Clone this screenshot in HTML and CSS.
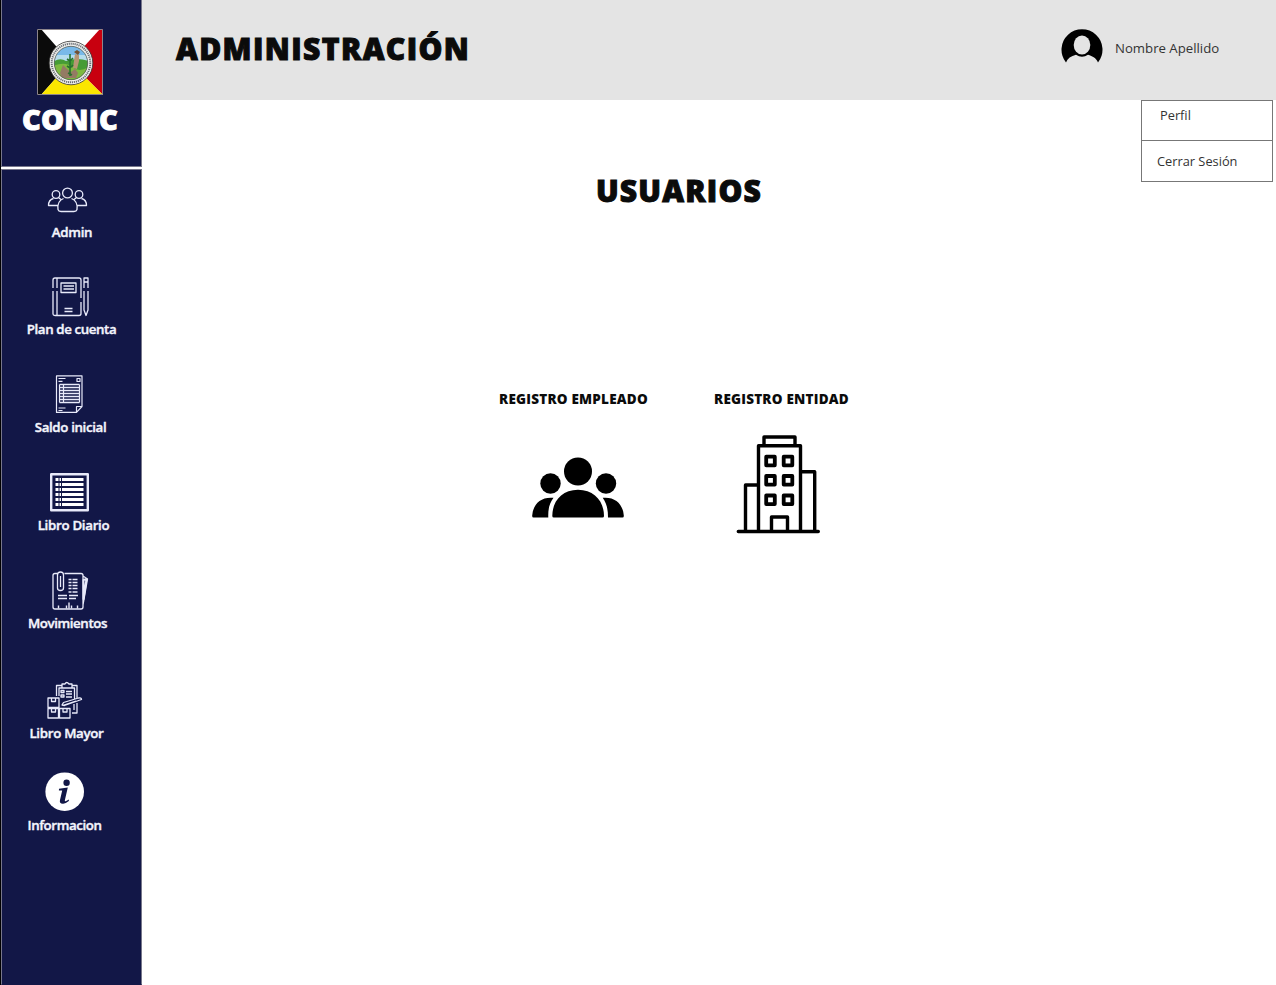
FILE: index.html
```html
<!DOCTYPE html>
<html lang="es">
<head>
<meta charset="utf-8">
<title>CONIC - Administración</title>
<link rel="stylesheet" href="styles.css">
</head>
<body>
<div class="app">
  <aside class="sidebar">
    <div class="brand">
      <svg class="flag" viewBox="37 29 66 66">
        <path fill="#fff" d="M37 29h66v66H37z"/>
        <path fill="#0b0b0b" d="M37 29h4l29 33-29 33h-4z"/>
        <path fill="#c8000f" d="M103 29h-3L70 62l33 33z"/>
        <path fill="#fae600" d="M41 95l29-33 33 33z"/>
        <circle cx="71" cy="63" r="21.8" fill="#f2f2ef" stroke="#333" stroke-width=".8"/>
        <circle cx="71" cy="63" r="19.3" fill="none" stroke="#6a6e75" stroke-width="2" stroke-dasharray="1.2 .8"/>
        <clipPath id="seal"><circle cx="71" cy="63" r="16.7"/></clipPath>
        <g clip-path="url(#seal)">
          <path fill="#78b9e9" d="M53 45h36v20H53z"/>
          <path fill="#b5dced" d="M53 55h36v8H53z"/>
          <path fill="#469c35" d="M53 62q7-5 13-1 11-4 23 0v22H53z"/>
          <path fill="#7dba3f" d="M53 66q12-5 19 1t17 0v14H53z"/>
          <path fill="#947b63" d="M60 73l3-8 4 4 4 3 4-3 3 4-2 5H62z"/>
          <path fill="#b99674" d="M75 54l4 1v6l-2 8-4-1z"/>
          <path fill="#725032" d="M74 52l3-2 3 2-2 3z"/>
          <path stroke="#28722d" stroke-width="1.600" fill="none" d="M70 76V54m-3 5 3 2 3-3m-6 8 3 2 3-3m-5 8 4 2"/>
        </g>
        <circle cx="71" cy="63" r="16.7" fill="none" stroke="#555b53" stroke-width=".8"/>
        <path fill="none" stroke="#8c858b" d="M37.500 29.500h65v65h-65z"/>
      </svg>
      <div class="brand-name">CONIC</div>
    </div>
    <nav class="menu">
      <a class="item admin">
        <svg class="icon" viewBox="2 172 139 50" stroke-width="1.3">
          <circle cx="67.500" cy="193" r="4.900"/><circle cx="56" cy="194.500" r="3.800"/><circle cx="79" cy="194.500" r="3.800"/>
          <path d="M63.500 198.500c-5 2-6 7-5.500 11q.5 2 3 2h13q2.500 0 3-2c.5-4-.5-9-5.500-11M53.500 198.500c-4 1-5 4-5 7h9M81.500 198.500c4 1 5 4 5 7h-9M58.500 197.500l3 2.500M76.500 197.500l-3 2.500"/>
        </svg>
        <span class="label">Admin</span>
      </a>
      <a class="item plan">
        <svg class="icon" viewBox="2 269 139 50" stroke-width="1.3">
          <path d="M53 288v-8q0-2 2-2h24q2 0 2 2v18M53 291v23q0 1.500 2 1.500h24q2 0 2-2V302M57 278v10M57 291v24.500M61 283h15v9.500H61zM63.500 286h10.500M63.500 289h10.500M64.500 308.500h8M64.500 311.500h8M84 288v-10h4v10M84 282h4M84 291v19l2 5.500 2-5.500v-19"/>
        </svg>
        <span class="label">Plan de cuenta</span>
      </a>
      <a class="item saldo">
        <svg class="icon" viewBox="2 367 139 50" stroke-width="1.200">
          <path d="M56.500 375.800h25.500v30.700l-5.500 5.900h-20zM76.500 412v-5.500H82M58.500 378.500h7M58.500 381.300h4M77 378.500h3v3h-3zM58.500 408h7M58.500 410.500h4M59.500 384.500v18M79.500 384.500v18M63.500 384v18.500"/>
          <path stroke-width="1.300" d="M59.500 384.500h20m-20 3h20m-20 3h20m-20 3h20m-20 3h20m-20 3h20m-20 3h20"/>
        </svg>
        <span class="label">Saldo inicial</span>
      </a>
      <a class="item diario">
        <svg class="icon" viewBox="2 465 139 50">
          <path stroke-width="2.400" d="M51.200 474.200h36.600v36.100H51.200z"/>
          <path stroke="#fff" stroke-width="3" d="M55.500 479.500h3m1 0h1.500m1 0h21.500M55.500 484.500h3m1 0h1.500m1 0h21.500M55.500 489.500h3m1 0h1.500m1 0h21.500M55.500 494.500h3m1 0h1.500m1 0h21.500M55.500 499.500h3m1 0h1.500m1 0h21.500M55.500 504.500h3m1 0h1.500m1 0h21.500"/>
        </svg>
        <span class="label">Libro Diario</span>
      </a>
      <a class="item movimientos">
        <svg class="icon" viewBox="2 563 139 50" stroke-width="1.300">
          <path d="M57.500 573.500H55q-2 0-2 2V607q0 2 2 2h26q2 0 2-2v-31.500q0-2-2-2H64.500M57.500 586v-11q0-3 3-3t3 3v13q0 2.500-3 2.500t-3-2.500v-3M60.500 576v11M83 576l4.500 3L83 605"/>
          <path stroke-width="2" d="M83.500 580l3-1-3 20z"/>
          <path stroke-width="1.400" d="M68.500 579.500h3m1 0h5M68.500 582.500h3m1 0h5M68.500 585.500h3m1 0h5M68.500 588.500h3m1 0h5M58 595.500h9m2 0h9M58 598.500h9m2 0h7M68.500 592h3m1 0h5M58.500 608.500v-3M66.500 608.500v-3M69 608.500v-6M71.500 608.500v-3M77.500 608.500v-3"/>
        </svg>
        <span class="label">Movimientos</span>
      </a>
      <a class="item mayor">
        <svg class="icon" viewBox="2 673 139 50" stroke-width="1.300">
          <path d="M56.500 696v-10.500H62M72 685.500h5V698M62 688v-4h3q1.500-3 4 0h3v4zM59 696v-8h3M72 688h2.500v11M61 690.500h3v2h-3zM61 695h3v2h-3zM66 691.500h6M66 694h6M66 697h6M48 698h11v9.500H48zM51.500 698v3.500h4V698M48 708.500h10.500v9.500H48zM51.500 708.500v3.500h4v-3.500M59.500 708.500H70v9.500H59.500zM63 708.500v3.500h4v-3.500M62 705l1.500-2.500 15-4.500q3-.5 3 1.500l-17 6zM64 705l12-4M77 703v10H72M74 704v6M72 713h5"/>
        </svg>
        <span class="label">Libro Mayor</span>
      </a>
      <a class="item info">
        <svg class="icon" viewBox="2 765 139 50">
          <circle class="solid" cx="64.700" cy="791.700" r="19.300"/>
          <circle class="navy" cx="66.600" cy="782.800" r="3.200"/>
          <path class="navy" d="M59 788.800l8.800-1.300-2.900 12.400q-.5 2 1.200 1.200l2.900-1.500-.2 1.500q-3.300 2.800-6 2.600-3.700-.1-2.800-3.800l2.200-9.500h-3.300z"/>
        </svg>
        <span class="label">Informacion</span>
      </a>
    </nav>
  </aside>
  <div class="page">
    <header class="topbar">
      <h1 class="title">ADMINISTRACIÓN</h1>
      <div class="user">
        <svg class="avatar" viewBox="0 0 42 36">
          <path d="M5 34.500A20.500 20.500 0 1 1 37 34.500C35.500 30.500 31.500 28 27 26.800Q21 30.500 15 26.800C10 28 6.500 30.500 5 34.500z"/>
          <ellipse cx="21" cy="17" rx="8.300" ry="9.500" fill="#e4e4e4"/>
        </svg>
        <span class="user-name">Nombre Apellido</span>
      </div>
      <div class="dropdown">
        <div class="option profile"><span>Perfil</span></div>
        <div class="option logout"><span>Cerrar Sesión</span></div>
      </div>
    </header>
    <main class="content">
      <h2 class="section-title">USUARIOS</h2>
      <div class="cards">
        <section class="card employee">
          <h3 class="card-title">REGISTRO EMPLEADO</h3>
          <svg class="card-icon" viewBox="498 412 150 126">
            <circle cx="578" cy="471.500" r="14"/><circle cx="550.500" cy="483.500" r="10.200"/><circle cx="606" cy="483.500" r="10.200"/>
            <path d="M552.300 516C552.300 501 562 489.700 578 489.700S604 501 604 516q0 1.500-1.500 1.500h-48.700q-1.500 0-1.500-1.500zM553.500 497.800C549 504 548 510 548.300 517.500H533.500q-1.500 0-1.300-2C533 504 541 496.500 553.500 497.800zM602.700 497.800C607 504 608 510 608 517.500h14.500q1.500 0 1.300-2C623 504 615 496.500 602.700 497.800z"/>
          </svg>
        </section>
        <section class="card entity">
          <h3 class="card-title">REGISTRO ENTIDAD</h3>
          <svg class="card-icon" viewBox="706 412 150 126">
            <g fill="none" stroke="#000" stroke-width="3.400" stroke-linejoin="round" stroke-linecap="round">
              <path d="M738.300 531.500h80M758.500 531v-85.300h42V531M764 445v-8h31v8M758 485h-12.500v46M801 471.700h13.700V531M771.500 531v-14h16v14"/>
              <path stroke-width="3.800" d="M766.200 456.700h8.600v8.600h-8.600zM783.700 456.700h8.600v8.600h-8.600zM766.200 476h8.600v8.600h-8.600zM783.700 476h8.600v8.600h-8.600zM766.200 495.500h8.600v8.600h-8.600zM783.700 495.500h8.600v8.600h-8.600z"/>
            </g>
          </svg>
        </section>
      </div>
    </main>
  </div>
</div>
</body>
</html>
```
FILE: styles.css
```css
* { box-sizing: border-box; }
body {
  margin: 0;
  background: #fff;
  color: #0b0b0b;
  font-family: "Open Sans", "Noto Sans", sans-serif;
}
h1, h2, h3 { margin: 0; font-weight: 800; white-space: nowrap; }
svg { display: block; flex: none; }

.app { display: flex; height: 985px; overflow: hidden; }

.sidebar {
  width: 142px;
  flex: none;
  border-left: 1px solid #000;
  display: flex;
  flex-direction: column;
  gap: 2px;
}
.brand, .menu {
  background: #121747;
  border: 1px solid #77778b;
  display: flex;
  flex-direction: column;
}
.brand { height: 167px; border-top: 0; align-items: center; padding-top: 29px; }
.menu { flex: 1; border-bottom-color: #121747; padding-top: 2px; }
.flag { width: 66px; height: 66px; margin-right: 3px; }
.brand-name {
  color: #fff;
  font-size: 29px;
  font-weight: 800;
  line-height: 40px;
  margin: 4px 3px 0 0;
  letter-spacing: .2px;
  -webkit-text-stroke: .9px #fff;
}

.item { display: flex; flex-direction: column; align-items: center; margin-bottom: 28px; }
.icon {
  width: 139px;
  height: 50px;
  fill: none;
  stroke: #e8eafa;
  stroke-linejoin: round;
}
.label {
  color: #f4f5fd;
  font-size: 13.3px;
  font-weight: 600;
  line-height: 20px;
  white-space: nowrap;
  -webkit-text-stroke: .4px #f4f5fd;
}
.solid { fill: #fff; stroke: none; }
.navy { fill: #121747; stroke: none; }
.admin { margin-bottom: 27px; }
.movimientos { margin-bottom: 40px; }
.mayor { margin-bottom: 22px; }
.admin .label { padding-left: 1px; letter-spacing: -.3px; }
.plan .label { letter-spacing: -.4px; }
.saldo .label { padding-right: 2px; letter-spacing: -.35px; }
.diario .label { padding-left: 4px; letter-spacing: -.3px; }
.movimientos .label { padding-right: 8px; letter-spacing: -.4px; }
.mayor .label { padding-right: 10px; letter-spacing: -.3px; }
.info .label { padding-right: 14px; letter-spacing: -.4px; }

.page { flex: 1; display: flex; flex-direction: column; }
.topbar {
  position: relative;
  height: 100px;
  background: #e4e4e4;
  display: flex;
  justify-content: space-between;
  align-items: flex-start;
  padding: 28px 56px 0 34px;
}
.title, .section-title {
  font-size: 30px;
  line-height: 41px;
  -webkit-text-stroke: 1px #0b0b0b;
}
.title { letter-spacing: 1.4px; }
.user { display: flex; gap: 12px; }
.avatar { width: 42px; height: 36px; }
.user-name {
  width: 105px;
  font-size: 13.2px;
  line-height: 20px;
  margin-top: 10px;
  color: #333;
  white-space: nowrap;
}
.dropdown {
  position: absolute;
  top: 100px;
  right: 3px;
  width: 132px;
  height: 82px;
  border: 1px solid #777;
  background: #fff;
  font-size: 12.8px;
  color: #333;
}
.option { height: 40px; line-height: 20px; }
.profile { padding: 4px 0 0 18px; border-bottom: 1px solid #777; }
.logout { padding: 10px 0 0 15px; }

.content { display: flex; flex-direction: column; align-items: center; padding: 70px 60px 0 0; }
.section-title { letter-spacing: 1.2px; height: 42px; }
.cards { width: 358px; margin: 177px 0 0 -4px; display: flex; gap: 58px; }
.card { width: 150px; display: flex; flex-direction: column; align-items: center; }
.card-title { font-size: 13.5px; line-height: 20px; letter-spacing: .22px; padding-left: 1px; }
.card-icon { width: 150px; height: 126px; margin-top: 3px; }
```
